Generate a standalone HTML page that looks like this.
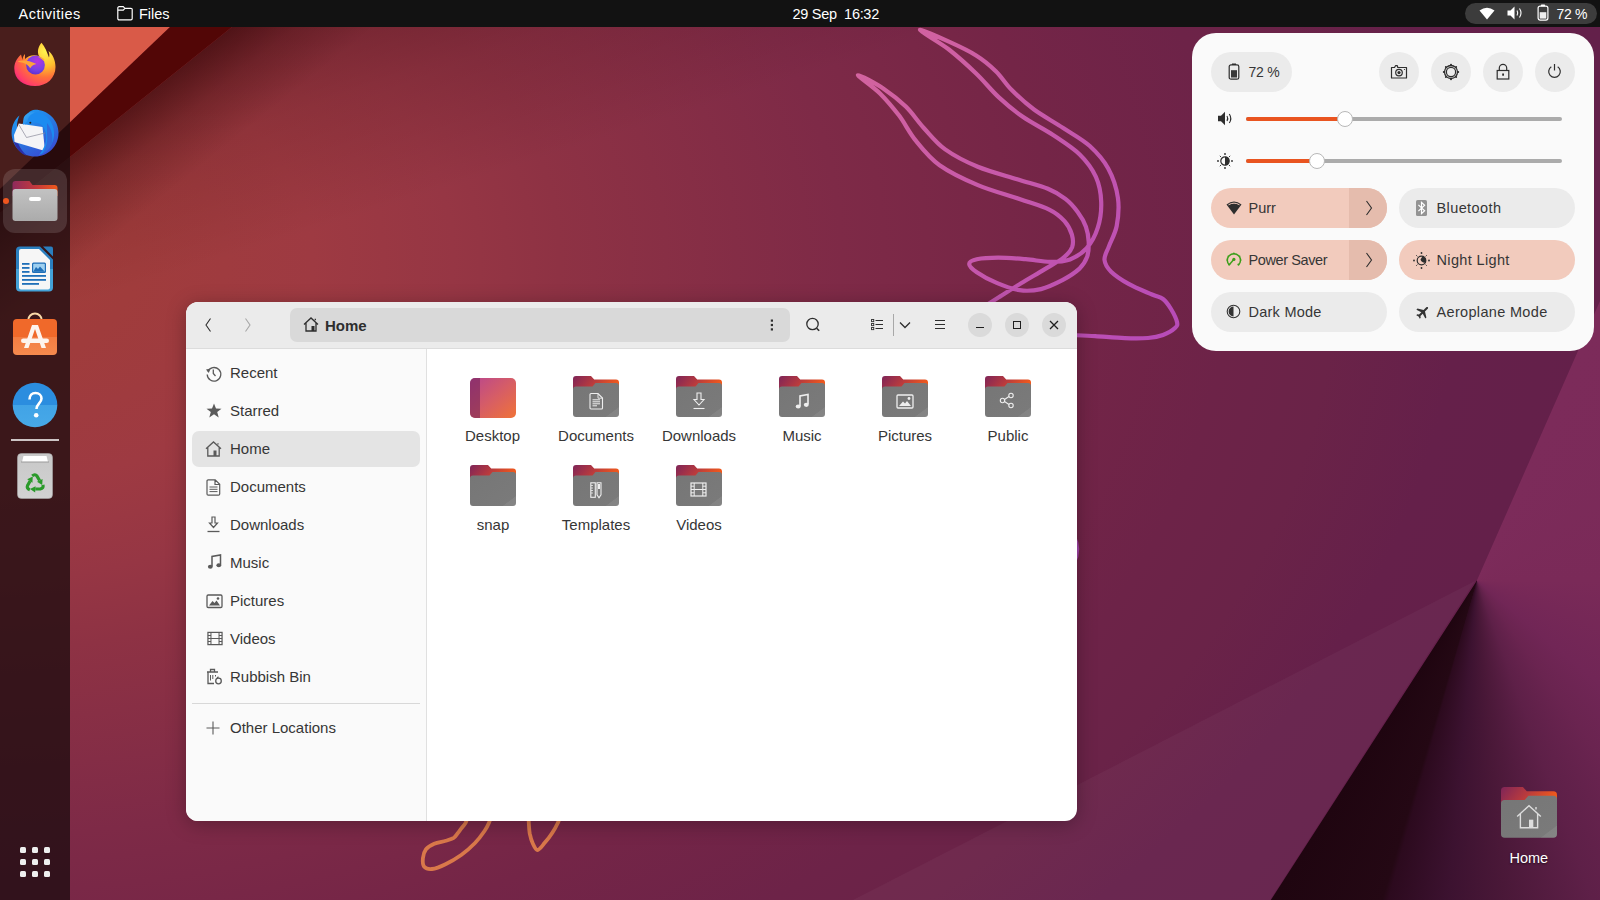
<!DOCTYPE html>
<html><head><meta charset="utf-8">
<style>
*{box-sizing:border-box;margin:0;padding:0}
html,body{width:1600px;height:900px;overflow:hidden;font-family:"Liberation Sans",sans-serif;background:#7a2a40}
.a{position:absolute}
svg{position:absolute;overflow:visible}
.t{position:absolute;white-space:nowrap;line-height:1;font-size:15px}
#topbar{position:absolute;left:0;top:0;width:1600px;height:27px;background:#121212}
#topbar .t{color:#fff;font-size:14.5px}
#dock{position:absolute;left:0;top:27px;width:70px;height:873px;background:rgba(28,12,14,0.76)}
#win{position:absolute;left:186px;top:302px;width:891px;height:519px;border-radius:12px;overflow:hidden;background:#fff;box-shadow:0 3px 20px rgba(0,0,0,0.28)}
#hdr{position:absolute;left:0;top:0;width:891px;height:47px;background:#ebebeb;border-bottom:1px solid #dcdcdc}
#side{position:absolute;left:0;top:47px;width:241px;height:472px;background:#fafafa;border-right:1px solid #e0e0e0}
.sb{color:#363636}
.gl{color:#363636;text-align:center;width:120px}
#qs{position:absolute;left:1192px;top:33px;width:402px;height:318px;border-radius:24px;background:#fafafa;}
.pill{position:absolute;border-radius:20px;height:40px;background:#ebebeb}
.on{background:#f2cbbd}
.qt{color:#363636}
</style></head>
<body>
<!-- WALLPAPER -->
<svg id="wall" style="left:0;top:0" width="1600" height="900" viewBox="0 0 1600 900">
<defs>
<radialGradient id="bg" cx="-40" cy="260" r="1500" gradientUnits="userSpaceOnUse" gradientTransform="translate(-40 260) scale(1.176 0.769) translate(40 -260)">
<stop offset="0" stop-color="#a43e3a"/>
<stop offset="0.1" stop-color="#a03c3c"/>
<stop offset="0.2" stop-color="#9e3a42"/>
<stop offset="0.28" stop-color="#963644"/>
<stop offset="0.34" stop-color="#8e3244"/>
<stop offset="0.5" stop-color="#7e2a47"/>
<stop offset="0.62" stop-color="#742547"/>
<stop offset="0.72" stop-color="#6d2348"/>
<stop offset="0.78" stop-color="#6a2348"/>
<stop offset="0.85" stop-color="#65204a"/>
<stop offset="1" stop-color="#62204a"/>
</radialGradient>
<linearGradient id="tlsh" x1="232" y1="27" x2="288" y2="97" gradientUnits="userSpaceOnUse">
<stop offset="0" stop-color="#2a0000" stop-opacity="0.5"/>
<stop offset="0.45" stop-color="#2a0000" stop-opacity="0.2"/>
<stop offset="1" stop-color="#2a0000" stop-opacity="0"/>
</linearGradient>
<linearGradient id="tlsh2" x1="232" y1="27" x2="298" y2="237" gradientUnits="userSpaceOnUse">
<stop offset="0" stop-color="#2a0000" stop-opacity="0.32"/>
<stop offset="0.45" stop-color="#2a0000" stop-opacity="0.13"/>
<stop offset="1" stop-color="#2a0000" stop-opacity="0"/>
</linearGradient>
<linearGradient id="pinkg" x1="850" y1="60" x2="1180" y2="300" gradientUnits="userSpaceOnUse">
<stop offset="0" stop-color="#d4649e"/>
<stop offset="1" stop-color="#b84cb8"/>
</linearGradient>
<clipPath id="rclip"><polygon points="1475,581 1600,301 1600,900 1270,900"/></clipPath>
<filter id="blur40" x="-50%" y="-50%" width="200%" height="200%"><feGaussianBlur stdDeviation="40"/></filter>
<filter id="blur8" x="-50%" y="-50%" width="200%" height="200%"><feGaussianBlur stdDeviation="8"/></filter>
</defs>
<rect width="1600" height="900" fill="url(#bg)"/>
<polygon points="232,27 1600,27 1600,900 0,900 0,213" fill="url(#tlsh)"/><polygon points="232,27 1600,27 1600,900 0,900 0,213" fill="url(#tlsh2)"/>
<polygon points="0,27 170,27 0,189" fill="#d95a48"/>
<polygon points="170,27 232,27 0,213 0,189" fill="#520606"/>
<polygon points="853,900 1475,581 1270,900" fill="#ffffff" fill-opacity="0.035"/>

<path d="M985.0 306.0 C987.5 304.4 993.8 300.4 999.9 296.6 C1005.9 292.8 1013.6 287.8 1021.1 283.2 C1028.6 278.6 1037.9 273.4 1044.9 269.1 C1052.0 264.8 1059.1 261.2 1063.6 257.5 C1068.2 253.8 1070.8 250.7 1072.2 246.9 C1073.5 243.0 1073.1 238.9 1071.9 234.6 C1070.6 230.3 1068.3 225.4 1064.5 221.2 C1060.8 217.0 1056.6 213.2 1049.2 209.6 C1041.8 205.9 1032.1 203.3 1020.2 199.2 C1008.3 195.1 991.3 190.8 977.9 185.1 C964.4 179.4 949.9 172.5 939.6 165.2 C929.3 157.8 922.7 149.2 916.0 140.9 C909.2 132.7 905.1 123.5 899.1 115.6 C893.1 107.7 886.8 100.2 880.0 93.4 C873.1 86.6 857.3 75.8 858.0 75.1 C858.7 74.3 875.9 83.6 883.9 88.9 C891.8 94.2 899.2 100.1 905.8 106.6 C912.5 113.1 917.3 120.9 923.8 128.0 C930.4 135.1 936.2 142.9 945.2 149.4 C954.2 155.8 965.8 161.8 977.8 166.8 C989.8 171.8 1005.5 175.6 1017.2 179.2 C1028.9 182.9 1039.9 185.4 1047.9 188.7 C1055.9 191.9 1060.4 195.0 1065.4 198.9 C1070.4 202.7 1074.3 207.4 1077.7 212.0 C1081.1 216.6 1084.1 221.7 1085.9 226.7 C1087.7 231.7 1088.5 237.0 1088.7 241.9 C1088.9 246.9 1088.7 252.1 1087.2 256.6 C1085.6 261.1 1083.3 264.9 1079.2 268.9 C1075.0 272.8 1068.7 276.8 1062.4 280.2 C1056.0 283.5 1048.1 287.4 1041.0 289.1 C1033.9 290.7 1027.0 291.3 1019.6 290.2 C1012.2 289.2 1003.8 285.9 996.7 282.9 C989.5 279.9 981.4 275.4 976.8 272.2 C972.2 269.0 969.2 266.1 969.2 263.9 C969.2 261.8 972.0 260.3 976.8 259.2 C981.6 258.2 990.1 257.6 998.2 257.6 C1006.4 257.6 1017.0 258.5 1025.7 259.2 C1034.4 259.9 1042.8 261.8 1050.2 261.8 C1057.5 261.8 1063.9 261.6 1070.0 259.4 C1076.1 257.1 1082.1 253.3 1086.7 248.1 C1091.3 242.8 1095.4 235.3 1097.8 227.6 C1100.3 219.9 1101.5 210.4 1101.2 201.9 C1100.9 193.5 1099.5 184.9 1095.9 176.9 C1092.3 169.0 1086.9 161.5 1079.7 154.5 C1072.4 147.5 1062.1 141.1 1052.7 134.8 C1043.2 128.5 1031.8 123.1 1022.8 116.8 C1013.8 110.5 1006.4 104.3 998.6 97.1 C990.8 89.9 984.4 81.4 976.1 73.5 C967.8 65.5 958.2 56.8 948.9 49.5 C939.5 42.3 919.9 31.4 919.9 30.1 C919.9 28.8 939.5 37.4 948.9 41.7 C958.2 45.9 968.3 50.5 976.1 55.5 C984.0 60.4 989.9 65.5 995.8 71.2 C1001.7 76.9 1005.2 83.4 1011.5 89.8 C1017.9 96.2 1025.3 103.1 1034.0 109.5 C1042.6 115.8 1054.0 121.9 1063.2 128.0 C1072.5 134.1 1082.2 139.2 1089.8 146.0 C1097.2 152.8 1103.6 159.9 1108.2 168.5 C1112.9 177.1 1116.5 188.2 1117.9 197.8 C1119.3 207.3 1118.2 217.9 1116.7 226.0 C1115.1 234.1 1110.8 241.0 1108.8 246.6 C1106.7 252.2 1104.1 255.7 1104.5 259.9 C1104.9 264.1 1107.0 267.6 1111.1 271.7 C1115.2 275.7 1122.3 280.4 1129.1 284.2 C1135.9 288.1 1146.3 292.0 1152.0 294.5 C1157.7 297.0 1159.8 296.6 1163.0 299.0 C1166.2 301.4 1168.7 305.2 1171.0 309.0 C1173.3 312.8 1176.3 318.8 1177.0 322.0 C1177.7 325.2 1177.3 325.8 1175.0 328.0 C1172.7 330.2 1167.5 333.3 1163.0 335.0 C1158.5 336.7 1154.4 337.5 1148.0 338.0 C1141.6 338.6 1133.5 338.5 1124.8 338.2 C1116.0 337.9 1104.4 336.7 1095.2 336.1 C1086.1 335.6 1074.2 335.2 1070.0 335.0" fill="none" stroke="url(#pinkg)" stroke-width="4.2" stroke-linecap="round" stroke-linejoin="round"/>
<path d="M467.5 817.0 C467.2 818.0 466.6 820.9 465.6 822.8 C464.6 824.6 462.9 826.5 461.5 828.2 C460.1 830.0 458.8 831.9 457.5 833.5 C456.2 835.1 455.7 836.5 453.8 837.8 C451.8 839.0 449.0 839.8 445.8 840.8 C442.5 841.8 437.5 842.3 434.2 843.8 C431.0 845.2 427.9 846.8 426.0 849.2 C424.1 851.7 423.2 855.3 422.9 858.2 C422.6 861.2 422.8 865.0 424.2 866.8 C425.8 868.5 428.3 869.4 431.9 869.0 C435.4 868.6 440.6 866.6 445.5 864.2 C450.4 861.9 456.3 858.5 461.2 855.0 C466.2 851.5 471.1 847.0 475.0 843.0 C478.9 839.0 482.1 834.5 484.5 831.0 C486.9 827.5 488.2 824.6 489.2 822.2 C490.3 819.9 490.7 817.9 491.0 817.0" fill="none" stroke="#d9784a" stroke-width="3.8" stroke-linecap="round" stroke-linejoin="round"/>
<path d="M528.8 817.0 C528.8 818.0 528.6 820.5 528.8 823.2 C529.0 825.9 529.1 830.0 529.7 833.4 C530.4 836.8 531.5 840.7 532.8 843.5 C534.1 846.2 535.5 850.1 537.5 850.0 C539.5 849.9 542.2 845.8 544.7 842.8 C547.2 839.9 550.4 835.7 552.5 832.4 C554.7 829.1 556.6 825.6 557.8 823.0 C559.1 820.5 559.6 818.0 560.0 817.0" fill="none" stroke="#d9784a" stroke-width="3.8" stroke-linecap="round" stroke-linejoin="round"/>
<path d="M1074 536 Q1081 549 1074 563" fill="none" stroke="#a244a8" stroke-width="3.5"/>
</svg>

<div class="a" style="left:1250px;top:280px;width:350px;height:620px;clip-path:polygon(226.8px 300.8px,350px 21px,350px 620px,20.8px 620px);background:conic-gradient(from 0deg at 226.8px 300.8px,#7c2b5a 24deg,#7a2a58 90deg,#712656 130deg,#6a2450 145deg,#5e2048 160deg,#4a1838 175deg,#3c1230 185deg,#2c0a1e 195.5deg,#240814 196.5deg,#1f0510 212.7deg)"></div>
<!-- TOP BAR -->
<div id="topbar">
<div class="t" style="left:18.5px;top:7px;letter-spacing:0.5px">Activities</div>
<svg style="left:116px;top:5px" width="18" height="16" viewBox="0 0 18 16"><path d="M1.8 3 a1.3 1.3 0 0 1 1.3-1.3 h4.2 l1.6 1.6 h6 a1.3 1.3 0 0 1 1.3 1.3 v9 a1.3 1.3 0 0 1 -1.3 1.3 h-11.8 a1.3 1.3 0 0 1 -1.3-1.3 z M1.8 5.2 h5.5 l1.5-1.9" fill="none" stroke="#fff" stroke-width="1.2" stroke-linejoin="round"/></svg>
<div class="t" style="left:139px;top:7px">Files</div>
<div class="t" style="left:792.5px;top:7px;letter-spacing:-0.3px">29 Sep&nbsp; 16:32</div>
<div class="a" style="left:1465px;top:3px;width:132px;height:21px;border-radius:11px;background:#3c3c3c"></div>
<svg style="left:1479px;top:7px" width="16" height="13" viewBox="0 0 16 13"><path d="M0.5 3.5 Q8 -2 15.5 3.5 L8 12.5 Z" fill="#fff"/></svg>
<svg style="left:1507px;top:6px" width="16" height="14" viewBox="0 0 16 14"><path d="M0.5 4.5 h3 l4-4 v13 l-4-4 h-3 z" fill="#fff"/><path d="M10 4.5 q1.5 2.5 0 5 M12.5 2.5 q3 4.5 0 9" fill="none" stroke="#fff" stroke-width="1.1"/></svg>
<svg style="left:1537px;top:4px" width="12" height="17" viewBox="0 0 12 17"><rect x="4" y="0.6" width="4" height="1.6" rx="0.5" fill="#fff"/><rect x="1.1" y="2.1" width="9.8" height="14" rx="2" fill="none" stroke="#fff" stroke-width="1.2"/><rect x="2.7" y="8.2" width="6.6" height="6.4" fill="#eee"/></svg>
<div class="t" style="left:1556.5px;top:7px;font-size:14px;letter-spacing:-0.3px">72 %</div>
</div>

<!-- DOCK -->
<div id="dock"></div>
<!-- firefox -->
<svg style="left:13px;top:42px" width="44" height="44" viewBox="0 0 44 44">
<defs>
<radialGradient id="ffo" cx="0.75" cy="0.2" r="1.0"><stop offset="0" stop-color="#fff44f"/><stop offset="0.35" stop-color="#ffbd2e"/><stop offset="0.6" stop-color="#ff7139"/><stop offset="0.85" stop-color="#ff3c6a"/><stop offset="1" stop-color="#e31587"/></radialGradient>
<radialGradient id="ffg" cx="0.6" cy="0.3" r="0.8"><stop offset="0" stop-color="#b833e1"/><stop offset="0.6" stop-color="#7542e5"/><stop offset="1" stop-color="#592acb"/></radialGradient>
</defs>
<path d="M28.5 0.8 C25 5 24 10 26 14 C20 12 15 14 12 17 L12 12 C10.5 13.5 9.5 15.5 9.5 18 L8 12.5 C3 17 1.3 22 1.3 26.5 C1.3 37 10 44 22 44 C34 44 42.5 36 42.5 25 C42.5 18 39.5 12 35.5 9 C36.5 12 36.5 14 36 15.5 C34 10 32 5 28.5 0.8 Z" fill="url(#ffo)"/>
<circle cx="22.5" cy="23" r="9.4" fill="url(#ffg)"/>
<path d="M30.5 19 C29 17 27 15.8 25 15.6 C27.5 14.5 30 15.5 31.5 17.5 Z" fill="#ffb52e"/>
<path d="M4.5 19.2 C9 18 14 18.2 18.5 20 C20.5 20.8 22 21.5 23.5 22 C21 22.3 18.8 23.5 17.2 26.2 C15.5 23.5 13 21.6 9.8 20.8 C8 20.4 6 20 4.5 19.2 Z" fill="#ffa33a"/>
</svg>
<!-- thunderbird -->
<svg style="left:11px;top:109px" width="48" height="48" viewBox="0 0 48 48">
<defs><linearGradient id="tbb" x1="0.2" y1="0" x2="0.8" y2="1"><stop offset="0" stop-color="#1d9cf5"/><stop offset="0.55" stop-color="#2a72de"/><stop offset="1" stop-color="#3a48d2"/></linearGradient>
<linearGradient id="tbh" x1="0" y1="0" x2="1" y2="1"><stop offset="0" stop-color="#3bb0f8"/><stop offset="1" stop-color="#1f7ae6"/></linearGradient></defs>
<path d="M24 0.8 C37 0.8 47.5 11 47.5 24 C47.5 37 37 47.5 24 47.5 C11 47.5 0.6 37 0.6 24 C0.6 17 3.5 10.5 8.5 6.5 C6 12 5.5 18 6.5 22 L12 14 C14 6 19 0.8 24 0.8 Z" fill="url(#tbb)"/>
<path d="M2.5 32 C5 40 10 45 16 47 C12 43 9 39 7.5 35 Z" fill="#2b2fa8"/>
<path d="M7.8 14.5 L31.5 18 L34 42 L3.5 33 L3 26 Z" fill="#f4f4f6"/>
<path d="M7.8 15.5 L15.5 28.5 L34 24" fill="none" stroke="#8a8a9a" stroke-width="0.7"/>
<path d="M14 12 C15 5 22 2 29 4 C38 7 44 16 43 27 C42 36 36 43 28 46 C33 40 36 33 35 25 C34 18 30 14 24 13.5 C20 13.2 17 14 14 15.5 Z" fill="#1c8bf0"/>
<path d="M36 14 C41 20 43 30 40 37 C38 41 34 44 30 46 C35 40 37 33 36 25 Z" fill="#2f6adc"/>
<path d="M13 8 C15 4 20 2.5 24 3.5 C20 5 17 8 16.5 12 L12.5 16 C12 13 12.2 10 13 8 Z" fill="url(#tbh)"/>
<circle cx="19.3" cy="13.8" r="1" fill="#222"/>
</svg>
<!-- files (active) -->
<div class="a" style="left:3px;top:169px;width:64px;height:64px;border-radius:12px;background:rgba(255,255,255,0.13)"></div>
<div class="a" style="left:3px;top:198px;width:6px;height:6px;border-radius:3px;background:#f0561f"></div>
<svg style="left:12px;top:180px" width="46" height="42" viewBox="0 0 46 42">
<defs><linearGradient id="dft" x1="0" y1="0" x2="1" y2="0"><stop offset="0" stop-color="#8e2a5c"/><stop offset="0.55" stop-color="#c63a3a"/><stop offset="1" stop-color="#ef5a1c"/></linearGradient>
<linearGradient id="dfb" x1="0" y1="0" x2="0" y2="1"><stop offset="0" stop-color="#c2c2c2"/><stop offset="1" stop-color="#ababab"/></linearGradient></defs>
<path d="M0.5 4 a3 3 0 0 1 3-3 h14 l3 4 h22 a3 3 0 0 1 3 3 v8 h-45 z" fill="url(#dft)"/>
<rect x="0.5" y="9" width="45" height="32" rx="3" fill="url(#dfb)"/>
<rect x="17" y="17" width="12" height="4" rx="2" fill="#fff"/>
</svg>
<!-- writer -->
<svg style="left:16px;top:246px" width="38" height="46" viewBox="0 0 38 46">
<defs><linearGradient id="wrb" x1="0" y1="0" x2="0" y2="1"><stop offset="0" stop-color="#2a7fbf"/><stop offset="0.5" stop-color="#2a7fbf"/><stop offset="0.5" stop-color="#43a2d8"/><stop offset="1" stop-color="#43a2d8"/></linearGradient></defs>
<path d="M4 0.5 h20 l13 13 v28 a4 4 0 0 1 -4 4 h-29 a4 4 0 0 1 -4-4 v-37 a4 4 0 0 1 4-4 z" fill="url(#wrb)"/>
<path d="M5 3 h18 l11 11 v27.5 a2 2 0 0 1 -2 2 h-27 a2 2 0 0 1 -2-2 v-36.5 a2 2 0 0 1 2-2 z" fill="#f6f6f6"/>
<path d="M27 0.5 h8 a2 2 0 0 1 2 2 v8 z" fill="#2a7fbf"/>
<g fill="#1f6fb8"><rect x="6" y="17" width="7.5" height="1.8"/><rect x="6" y="21" width="7.5" height="1.8"/><rect x="6" y="25" width="7.5" height="1.8"/><rect x="6" y="29" width="24" height="1.8"/><rect x="6" y="33" width="24" height="1.8"/><rect x="6" y="37" width="17" height="1.8"/></g>
<rect x="16" y="16.5" width="14" height="10.5" rx="1.5" fill="#1f6fb8"/>
<rect x="17.2" y="17.7" width="11.6" height="8" rx="0.8" fill="#9ed0f0"/>
<path d="M17.2 25.7 L20 21 L22 23 L24 20.5 L28.8 25.7 Z" fill="#1f6fb8"/>
</svg>
<!-- app center -->
<svg style="left:12px;top:312px" width="46" height="44" viewBox="0 0 46 44">
<defs><linearGradient id="acb" x1="0" y1="0" x2="0" y2="1"><stop offset="0" stop-color="#f0692a"/><stop offset="0.5" stop-color="#f0692a"/><stop offset="0.5" stop-color="#f37d42"/><stop offset="1" stop-color="#f58a4e"/></linearGradient></defs>
<path d="M16.2 9.5 v-1.2 a6.8 6.8 0 0 1 13.6 0 v1.2" fill="none" stroke="#f9d9a8" stroke-width="2"/>
<rect x="1" y="7" width="44" height="36" rx="4" fill="url(#acb)"/>
<path d="M12 36 L20 13 h6 L34 36 h-4.5 L23 17 L16.5 36 Z" fill="#fdf4ee"/>
<rect x="9" y="26.5" width="28" height="4.5" rx="2.25" fill="#fdf4ee"/>
</svg>
<!-- help -->
<svg style="left:12px;top:382px" width="46" height="46" viewBox="0 0 46 46">
<defs><linearGradient id="hpb" x1="0" y1="0" x2="0" y2="1"><stop offset="0" stop-color="#2b8ddf"/><stop offset="0.5" stop-color="#2b8ddf"/><stop offset="0.5" stop-color="#41a3e6"/><stop offset="1" stop-color="#47a9e8"/></linearGradient></defs>
<circle cx="23" cy="23" r="22.3" fill="url(#hpb)"/>
<path d="M17.5 17.5 C17.5 13 20 11 23.5 11 C27 11 29.5 13.5 29.5 16.5 C29.5 21 24.5 22 24.5 27" fill="none" stroke="#fff" stroke-width="2.6"/>
<circle cx="24.2" cy="33.2" r="2.3" fill="#fff"/>
</svg>
<div class="a" style="left:11px;top:439px;width:48px;height:2px;background:rgba(255,255,255,0.75)"></div>
<!-- trash -->
<svg style="left:17px;top:453px" width="36" height="46" viewBox="0 0 36 46">
<defs><linearGradient id="trb" x1="0" y1="0" x2="0" y2="1"><stop offset="0" stop-color="#c8c8c8"/><stop offset="1" stop-color="#d2d2d2"/></linearGradient></defs>
<rect x="0.5" y="0.5" width="35" height="45" rx="4" fill="url(#trb)" stroke="#aaa" stroke-width="0.6"/>
<path d="M5 9 L6.5 3 h23 L31 9 Z" fill="#fff"/>
<path d="M4 9 h28" stroke="#999" stroke-width="1"/>
<g transform="translate(18,30.5)"><g id="rarm"><path d="M-2.8 -7.6 Q0 -10 2 -7.4 L4.6 -3" stroke="#2a9a2a" stroke-width="3.2" fill="none"/><path d="M2 -1.8 L7.6 -4.6 L7.2 1.6 Z" fill="#2a9a2a"/></g><use href="#rarm" transform="rotate(120)"/><use href="#rarm" transform="rotate(240)"/></g>
</svg>
<!-- app grid -->
<svg style="left:20px;top:847px" width="30" height="30" viewBox="0 0 30 30"><g fill="#eee">
<rect x="0" y="0" width="6" height="6" rx="1.5"/><rect x="12" y="0" width="6" height="6" rx="1.5"/><rect x="24" y="0" width="6" height="6" rx="1.5"/>
<rect x="0" y="12" width="6" height="6" rx="1.5"/><rect x="12" y="12" width="6" height="6" rx="1.5"/><rect x="24" y="12" width="6" height="6" rx="1.5"/>
<rect x="0" y="24" width="6" height="6" rx="1.5"/><rect x="12" y="24" width="6" height="6" rx="1.5"/><rect x="24" y="24" width="6" height="6" rx="1.5"/>
</g></svg>

<!-- FILES WINDOW -->
<div id="win">
<div id="hdr"></div>
<div id="side"></div>
</div>
<!-- header content -->
<svg style="left:203px;top:317px" width="10" height="16" viewBox="0 0 10 16"><path d="M7.5 1.5 L3 8 L7.5 14.5" fill="none" stroke="#2e2e2e" stroke-width="1.1"/></svg>
<svg style="left:243px;top:317px" width="10" height="16" viewBox="0 0 10 16"><path d="M2.5 1.5 L7 8 L2.5 14.5" fill="none" stroke="#a8a8a8" stroke-width="1.1"/></svg>
<div class="a" style="left:290px;top:308px;width:500px;height:34px;border-radius:7px;background:#d9d9d9"></div>
<svg style="left:303px;top:317px" width="16" height="15" viewBox="0 0 16 15"><path d="M1 7.5 L8 1 L15 7.5 M3 5.8 V14 H13 V5.8 M12.3 3.2 V1.8" fill="none" stroke="#2e2e2e" stroke-width="1.3"/><rect x="8.5" y="9" width="3" height="5" fill="#2e2e2e"/></svg>
<div class="t" style="left:325px;top:318px;font-weight:bold;color:#2e2e2e">Home</div>
<svg style="left:770px;top:319px" width="4" height="12" viewBox="0 0 4 12"><g fill="#2e2e2e"><rect x="0.8" y="0.5" width="2.2" height="2.2"/><rect x="0.8" y="4.9" width="2.2" height="2.2"/><rect x="0.8" y="9.3" width="2.2" height="2.2"/></g></svg>
<svg style="left:804px;top:316px" width="18" height="18" viewBox="0 0 18 18"><circle cx="8.5" cy="8" r="5.7" fill="none" stroke="#2e2e2e" stroke-width="1.3"/><path d="M12.6 12.2 L15.2 14.8" stroke="#2e2e2e" stroke-width="1.6"/></svg>
<svg style="left:870px;top:319px" width="14" height="12" viewBox="0 0 14 12"><g fill="none" stroke="#2e2e2e" stroke-width="0.9"><rect x="1.55" y="0.45" width="2.2" height="2.2"/><rect x="1.55" y="4.45" width="2.2" height="2.2"/><rect x="1.55" y="8.45" width="2.2" height="2.2"/></g><g stroke="#2e2e2e" stroke-width="1.1"><path d="M5.5 1.5 H13 M5.5 5.5 H13 M5.5 9.5 H13"/></g></svg>
<div class="a" style="left:893px;top:314px;width:1px;height:22px;background:#a8a8a8"></div>
<svg style="left:899px;top:321px" width="12" height="8" viewBox="0 0 12 8"><path d="M1 1.5 L6 6.5 L11 1.5" fill="none" stroke="#2e2e2e" stroke-width="1.3"/></svg>
<svg style="left:934px;top:319px" width="12" height="12" viewBox="0 0 12 12"><path d="M1 1.5 H11 M1 5.5 H11 M1 9.5 H11" stroke="#2e2e2e" stroke-width="1.2"/></svg>
<div class="a" style="left:968px;top:313px;width:24px;height:24px;border-radius:12px;background:#dadada"></div>
<div class="a" style="left:1005px;top:313px;width:24px;height:24px;border-radius:12px;background:#dadada"></div>
<div class="a" style="left:1042px;top:313px;width:24px;height:24px;border-radius:12px;background:#dadada"></div>
<div class="a" style="left:976px;top:326.8px;width:8px;height:1.5px;background:#1e1e1e"></div>
<div class="a" style="left:1013px;top:321px;width:8px;height:8px;border:1.3px solid #1e1e1e"></div>
<svg style="left:1049px;top:320px" width="10" height="10" viewBox="0 0 10 10"><path d="M1 1 L9 9 M9 1 L1 9" stroke="#1e1e1e" stroke-width="1.3"/></svg>
<!-- sidebar -->
<div class="a" style="left:192px;top:431px;width:228px;height:36px;border-radius:7px;background:#e4e4e4"></div>
<div class="a" style="left:192px;top:703px;width:228px;height:1px;background:#d8d8d8"></div>
<g></g>
<svg style="left:205px;top:365px" width="17" height="17" viewBox="0 0 17 17"><path d="M2.8 6.5 A6.8 6.8 0 1 1 2.2 9.5" fill="none" stroke="#5a5a5a" stroke-width="1.3"/><path d="M1 4.5 L5.5 3.5 L3.8 8 Z" fill="#5a5a5a"/><path d="M8.3 4.5 V8.5 L10.5 11" fill="none" stroke="#5a5a5a" stroke-width="1.3"/></svg>
<svg style="left:206px;top:403px" width="16" height="15" viewBox="0 0 16 15"><path d="M8 0.5 L10 5.5 L15.5 5.7 L11.2 9 L12.7 14.5 L8 11.3 L3.3 14.5 L4.8 9 L0.5 5.7 L6 5.5 Z" fill="#5a5a5a"/></svg>
<svg style="left:205px;top:441px" width="17" height="16" viewBox="0 0 17 16"><path d="M1 7.8 L8.5 1 L16 7.8 M2.8 6.2 V15 H14.2 V6.2 M13 3.6 V2.2" fill="none" stroke="#5a5a5a" stroke-width="1.3"/><rect x="8.5" y="9.5" width="3" height="5.5" fill="#5a5a5a"/></svg>
<svg style="left:206px;top:479px" width="15" height="17" viewBox="0 0 15 17"><path d="M1 2 a1.2 1.2 0 0 1 1.2-1.2 h7 l4.5 4.5 v9.7 a1.2 1.2 0 0 1 -1.2 1.2 h-10.3 a1.2 1.2 0 0 1 -1.2-1.2 z M9 1 v4.5 h4.5" fill="none" stroke="#5a5a5a" stroke-width="1.2"/><path d="M3.5 8 h8 M3.5 10.3 h8 M3.5 12.6 h8" stroke="#5a5a5a" stroke-width="1"/></svg>
<svg style="left:206px;top:516px" width="15" height="17" viewBox="0 0 15 17"><path d="M6 1 V7 H3.5 L7.5 11.5 L11.5 7 H9 V1 Z" fill="none" stroke="#5a5a5a" stroke-width="1.2"/><path d="M1.5 15.5 H13.5" stroke="#5a5a5a" stroke-width="1.3"/></svg>
<svg style="left:207px;top:554px" width="15" height="16" viewBox="0 0 15 16"><path d="M5 12.5 V2.5 L13.5 1 V11" fill="none" stroke="#5a5a5a" stroke-width="1.5"/><ellipse cx="3.3" cy="12.8" rx="2.4" ry="2" fill="#5a5a5a"/><ellipse cx="11.8" cy="11.3" rx="2.4" ry="2" fill="#5a5a5a"/></svg>
<svg style="left:206px;top:594px" width="17" height="15" viewBox="0 0 17 15"><rect x="1" y="1" width="15" height="12.5" rx="1.2" fill="none" stroke="#5a5a5a" stroke-width="1.3"/><path d="M3 11.5 L6.5 7 L8.5 9 L10.5 6.5 L14 11.5 Z" fill="#5a5a5a"/><circle cx="12" cy="4.5" r="1.3" fill="#5a5a5a"/></svg>
<svg style="left:206.5px;top:631px" width="16" height="15" viewBox="0 0 17 15"><rect x="1" y="1" width="15" height="13" fill="none" stroke="#5a5a5a" stroke-width="1.3"/><path d="M4.2 1 V14 M12.8 1 V14 M4.2 7.5 H12.8 M1 4.2 H4.2 M1 7.5 H4.2 M1 10.8 H4.2 M12.8 4.2 H16 M12.8 7.5 H16 M12.8 10.8 H16" stroke="#5a5a5a" stroke-width="1.1"/></svg>
<svg style="left:205px;top:668px" width="18" height="17" viewBox="0 0 18 17"><path d="M2 4 H13 M5.5 4 V1.5 H9.5 V4 M3 4.5 V15.5 H9" fill="none" stroke="#5a5a5a" stroke-width="1.3"/><path d="M5.5 7 V12.5 M7.8 7 V11 M10.5 7 V8.5" stroke="#5a5a5a" stroke-width="1"/><circle cx="13.5" cy="13" r="2.8" fill="none" stroke="#5a5a5a" stroke-width="1.3"/><path d="M12 10 L13.5 8.8" stroke="#5a5a5a" stroke-width="1.2"/></svg>
<svg style="left:206px;top:721px" width="14" height="14" viewBox="0 0 14 14"><path d="M7 0.5 V13.5 M0.5 7 H13.5" stroke="#5a5a5a" stroke-width="1.1"/></svg>
<div class="t sb" style="left:230px;top:365.3px">Recent</div>
<div class="t sb" style="left:230px;top:403.3px">Starred</div>
<div class="t sb" style="left:230px;top:441.3px">Home</div>
<div class="t sb" style="left:230px;top:479.3px">Documents</div>
<div class="t sb" style="left:230px;top:517.3px">Downloads</div>
<div class="t sb" style="left:230px;top:555.3px">Music</div>
<div class="t sb" style="left:230px;top:593.3px">Pictures</div>
<div class="t sb" style="left:230px;top:631.3px">Videos</div>
<div class="t sb" style="left:230px;top:669.3px">Rubbish Bin</div>
<div class="t sb" style="left:230px;top:720.3px">Other Locations</div>
<!-- grid -->
<svg width="0" height="0" style="left:0;top:0"><defs>
<linearGradient id="ftab" x1="0" y1="0" x2="1" y2="0.3"><stop offset="0" stop-color="#7e2558"/><stop offset="0.5" stop-color="#b83a3e"/><stop offset="1" stop-color="#f0591c"/></linearGradient>
<linearGradient id="fbody" x1="0" y1="0" x2="1" y2="1"><stop offset="0" stop-color="#767676"/><stop offset="0.85" stop-color="#7a7a7a"/><stop offset="0.86" stop-color="#838383"/><stop offset="1" stop-color="#858585"/></linearGradient>
<linearGradient id="desk" x1="0" y1="0" x2="1" y2="1"><stop offset="0" stop-color="#b8468f"/><stop offset="0.5" stop-color="#d65d66"/><stop offset="1" stop-color="#f07338"/></linearGradient>
<symbol id="fold" viewBox="0 0 46 42"><path d="M0 3 a3 3 0 0 1 3-3 h15 l3.2 3.5 h21.8 a3 3 0 0 1 3 3 v10 h-46 z" fill="url(#ftab)"/><path d="M0 13.5 a3 3 0 0 1 3-3 h16.5 l3-3.5 h20.5 a3 3 0 0 1 3 3 v28 a3 3 0 0 1 -3 3 h-40 a3 3 0 0 1 -3-3 z" fill="url(#fbody)"/></symbol>
</defs></svg>
<svg style="left:470px;top:378px" width="46" height="40" viewBox="0 0 46 40"><rect x="0" y="0" width="46" height="40" rx="5" fill="url(#desk)"/><path d="M5 0 h5 v40 h-5 a5 5 0 0 1 -5-5 v-30 a5 5 0 0 1 5-5 z" fill="#6e2055" opacity="0.55"/></svg>
<svg style="left:573px;top:376px" width="46" height="42"><use href="#fold"/></svg>
<svg style="left:676px;top:376px" width="46" height="42"><use href="#fold"/></svg>
<svg style="left:779px;top:376px" width="46" height="42"><use href="#fold"/></svg>
<svg style="left:882px;top:376px" width="46" height="42"><use href="#fold"/></svg>
<svg style="left:985px;top:376px" width="46" height="42"><use href="#fold"/></svg>
<svg style="left:470px;top:465px" width="46" height="42"><use href="#fold"/></svg>
<svg style="left:573px;top:465px" width="46" height="42"><use href="#fold"/></svg>
<svg style="left:676px;top:465px" width="46" height="42"><use href="#fold"/></svg>
<!-- emblems -->
<svg style="left:589px;top:393px" width="15" height="17" viewBox="0 0 15 17"><path d="M1 1.5 a1 1 0 0 1 1-1 h7 l4.5 4.5 v10 a1 1 0 0 1 -1 1 h-10.5 a1 1 0 0 1 -1-1 z" fill="none" stroke="#eee" stroke-width="1.1"/><path d="M9 0.8 V5.2 H13.3" fill="none" stroke="#eee" stroke-width="0.9"/><path d="M3.5 6.8 h7.5 M3.5 8.8 h7.5 M3.5 10.8 h7.5 M3.5 12.8 h4.5" stroke="#eee" stroke-width="1"/></svg>
<svg style="left:692px;top:392px" width="14" height="18" viewBox="0 0 14 18"><path d="M5 1 V7.5 H2 L7 13 L12 7.5 H9 V1 Z" fill="none" stroke="#eee" stroke-width="1.1"/><path d="M1.5 16.5 H12.5" stroke="#eee" stroke-width="1.1"/></svg>
<svg style="left:795px;top:393px" width="15" height="17" viewBox="0 0 15 17"><path d="M5 13 V3 L13 1.5 V11" fill="none" stroke="#eee" stroke-width="1.6"/><ellipse cx="3.2" cy="13.5" rx="2.5" ry="2.1" fill="#eee"/><ellipse cx="11.3" cy="11.8" rx="2.5" ry="2.1" fill="#eee"/></svg>
<svg style="left:896px;top:394px" width="18" height="15" viewBox="0 0 18 15"><rect x="1" y="1" width="16" height="13" rx="1" fill="none" stroke="#eee" stroke-width="1.3"/><path d="M3 12 L7 7.5 L9 9.5 L11 7 L15 12 Z" fill="#eee"/><circle cx="13" cy="4.5" r="1.4" fill="#eee"/></svg>
<svg style="left:999px;top:392px" width="16" height="17" viewBox="0 0 16 17"><g fill="none" stroke="#eee" stroke-width="1.1"><circle cx="3.5" cy="8.5" r="2.2"/><circle cx="12" cy="3.5" r="2.2"/><circle cx="12" cy="13.5" r="2.2"/><path d="M5.5 7.5 L10 4.5 M5.5 9.5 L10 12.5"/></g></svg>
<svg style="left:590px;top:482px" width="12" height="17" viewBox="0 0 12 17"><g fill="none" stroke="#eee" stroke-width="1.1"><rect x="0.8" y="0.8" width="4.5" height="14.5"/><path d="M7 0.8 h4 v12 l-2 3 l-2-3 z"/></g><path d="M1 3.5 h2 M1 6 h2 M1 8.5 h2 M1 11 h2" stroke="#eee" stroke-width="0.8"/><rect x="8" y="2" width="2" height="5" fill="#eee"/></svg>
<svg style="left:690px;top:482px" width="17" height="15" viewBox="0 0 17 15"><rect x="1" y="1" width="15" height="13" fill="none" stroke="#eee" stroke-width="1.2"/><path d="M4.2 1 V14 M12.8 1 V14 M4.2 7.5 H12.8 M1 4.2 H4.2 M1 7.5 H4.2 M1 10.8 H4.2 M12.8 4.2 H16 M12.8 7.5 H16 M12.8 10.8 H16" stroke="#eee" stroke-width="1"/></svg>
<div class="t gl" style="left:432.5px;top:428px">Desktop</div>
<div class="t gl" style="left:536px;top:428px">Documents</div>
<div class="t gl" style="left:639px;top:428px">Downloads</div>
<div class="t gl" style="left:742px;top:428px">Music</div>
<div class="t gl" style="left:845px;top:428px">Pictures</div>
<div class="t gl" style="left:948px;top:428px">Public</div>
<div class="t gl" style="left:433px;top:517px">snap</div>
<div class="t gl" style="left:536px;top:517px">Templates</div>
<div class="t gl" style="left:639px;top:517px">Videos</div>

<!-- QUICK SETTINGS -->
<div id="qs"></div>
<div class="pill" style="left:1211px;top:52px;width:81px"></div>
<svg style="left:1228px;top:63px" width="12" height="17" viewBox="0 0 12 17"><rect x="4" y="0.5" width="4" height="1.5" fill="#2e2e2e"/><rect x="1.2" y="1.8" width="9.6" height="14.4" rx="1.8" fill="none" stroke="#2e2e2e" stroke-width="1.2"/><rect x="3" y="7.2" width="6" height="7.3" fill="#3a3a3a"/></svg>
<div class="t qt" style="left:1248.5px;top:64.7px;font-size:14px;letter-spacing:-0.2px">72 %</div>
<div class="a" style="left:1379px;top:52px;width:40px;height:40px;border-radius:20px;background:#ebebeb"></div>
<div class="a" style="left:1431px;top:52px;width:40px;height:40px;border-radius:20px;background:#ebebeb"></div>
<div class="a" style="left:1483px;top:52px;width:40px;height:40px;border-radius:20px;background:#ebebeb"></div>
<div class="a" style="left:1535px;top:52px;width:40px;height:40px;border-radius:20px;background:#ebebeb"></div>
<svg style="left:1390px;top:64px" width="18" height="15" viewBox="0 0 18 15"><path d="M1.5 3.5 h3 l1-1.8 h1.8 l0.5 1.8 h8.7 v10.5 h-15 z" fill="none" stroke="#2e2e2e" stroke-width="1.2" stroke-linejoin="round"/><circle cx="9" cy="8.6" r="3.3" fill="none" stroke="#2e2e2e" stroke-width="1.2"/><circle cx="9" cy="8.6" r="1.6" fill="#2e2e2e"/><circle cx="14.5" cy="5.5" r="0.6" fill="#2e2e2e"/></svg>
<svg style="left:1442px;top:63px" width="18" height="18" viewBox="0 0 18 18"><circle cx="9" cy="9" r="6.5" fill="none" stroke="#2e2e2e" stroke-width="1.3"/><circle cx="9" cy="9" r="4.6" fill="none" stroke="#2e2e2e" stroke-width="1.2"/><g fill="#2e2e2e"><circle cx="9" cy="1.8" r="1"/><circle cx="9" cy="16.2" r="1"/><circle cx="1.8" cy="9" r="1"/><circle cx="16.2" cy="9" r="1"/><circle cx="3.9" cy="3.9" r="1"/><circle cx="14.1" cy="14.1" r="1"/><circle cx="3.9" cy="14.1" r="1"/><circle cx="14.1" cy="3.9" r="1"/></g></svg>
<svg style="left:1496px;top:63px" width="14" height="17" viewBox="0 0 14 17"><path d="M3.3 7.5 V5 a3.7 3.7 0 0 1 7.4 0 V7.5" fill="none" stroke="#2e2e2e" stroke-width="1.2"/><rect x="1.2" y="7.5" width="11.6" height="8.5" fill="none" stroke="#2e2e2e" stroke-width="1.2"/><rect x="6.2" y="10.5" width="1.8" height="2.2" fill="#2e2e2e"/></svg>
<svg style="left:1547px;top:63px" width="15" height="16" viewBox="0 0 15 16"><path d="M4.3 3.8 A5.8 5.8 0 1 0 10.7 3.8" fill="none" stroke="#2e2e2e" stroke-width="1.2"/><path d="M7.5 1 V7.5" stroke="#2e2e2e" stroke-width="1.2"/></svg>
<!-- sliders -->
<svg style="left:1217px;top:111px" width="16" height="15" viewBox="0 0 16 15"><path d="M1 4.8 h3 l4-4 v13.4 l-4-4 h-3 z" fill="#2e2e2e"/><path d="M10 5 q1.5 2.5 0 5 M12.3 3 q3 4.5 0 9" fill="none" stroke="#2e2e2e" stroke-width="1.1"/></svg>
<div class="a" style="left:1246px;top:117px;width:316px;height:4px;border-radius:2px;background:#ababab"></div>
<div class="a" style="left:1246px;top:117px;width:99px;height:4px;border-radius:2px;background:#e95420"></div>
<div class="a" style="left:1336.5px;top:111px;width:16px;height:16px;border-radius:8px;background:#fff;border:1px solid #b8b8b8"></div>
<svg style="left:1217px;top:153px" width="16" height="16" viewBox="0 0 16 16"><circle cx="8" cy="8" r="4.2" fill="none" stroke="#2e2e2e" stroke-width="1.2"/><path d="M8 3.8 A4.2 4.2 0 0 1 8 12.2 Z" fill="#2e2e2e"/><g fill="#2e2e2e"><circle cx="8" cy="1" r="0.9"/><circle cx="8" cy="15" r="0.9"/><circle cx="1" cy="8" r="0.9"/><circle cx="15" cy="8" r="0.9"/></g><path d="M2.8 2.8 L4 4 M13.2 13.2 L12 12 M2.8 13.2 L4 12 M13.2 2.8 L12 4" stroke="#2e2e2e" stroke-width="0.9"/></svg>
<div class="a" style="left:1246px;top:159px;width:316px;height:4px;border-radius:2px;background:#ababab"></div>
<div class="a" style="left:1246px;top:159px;width:71px;height:4px;border-radius:2px;background:#e95420"></div>
<div class="a" style="left:1308.8px;top:153px;width:16px;height:16px;border-radius:8px;background:#fff;border:1px solid #b8b8b8"></div>
<!-- toggles -->
<div class="pill on" style="left:1211px;top:188px;width:176px;overflow:hidden"><div class="a" style="left:138px;top:0;width:38px;height:40px;background:#e5bcad"></div></div>
<div class="pill on" style="left:1211px;top:240px;width:176px;overflow:hidden"><div class="a" style="left:138px;top:0;width:38px;height:40px;background:#e5bcad"></div></div>
<div class="pill" style="left:1399px;top:188px;width:176px"></div>
<div class="pill on" style="left:1399px;top:240px;width:176px"></div>
<div class="pill" style="left:1211px;top:292px;width:176px"></div>
<div class="pill" style="left:1399px;top:292px;width:176px"></div>
<svg style="left:1365px;top:200px" width="8" height="16" viewBox="0 0 8 16"><path d="M1.5 1 L6.5 8 L1.5 15" fill="none" stroke="#2e2e2e" stroke-width="1.1"/></svg>
<svg style="left:1365px;top:252px" width="8" height="16" viewBox="0 0 8 16"><path d="M1.5 1 L6.5 8 L1.5 15" fill="none" stroke="#2e2e2e" stroke-width="1.1"/></svg>
<svg style="left:1226px;top:201px" width="16" height="14" viewBox="0 0 16 14"><path d="M0.5 3.5 Q8 -2.5 15.5 3.5 L8 13.5 Z" fill="#2e2e2e"/><path d="M2.5 3.8 Q8 0.5 13.5 3.8" fill="none" stroke="#f2cbbd" stroke-width="1"/></svg>
<svg style="left:1226px;top:252px" width="16" height="16" viewBox="0 0 16 16"><path d="M3.5 13.2 A6.6 6.6 0 1 1 12.3 13.2" fill="none" stroke="#3c9f1a" stroke-width="1.5"/><g fill="#3c9f1a"><circle cx="7.9" cy="1.4" r="0.9"/><circle cx="2.2" cy="4.2" r="0.8"/><circle cx="13.7" cy="4.2" r="0.8"/><circle cx="1.2" cy="8" r="0.8"/><circle cx="14.7" cy="8" r="0.8"/><circle cx="3.2" cy="12.6" r="1"/><circle cx="12.4" cy="12.6" r="1"/></g><path d="M3.5 12.5 L7.5 7.8" stroke="#3c9f1a" stroke-width="1.4"/><circle cx="7.9" cy="7.4" r="1.6" fill="#3c9f1a"/></svg>
<svg style="left:1226px;top:304px" width="15" height="15" viewBox="0 0 15 15"><circle cx="7.5" cy="7.5" r="6.3" fill="none" stroke="#333" stroke-width="1.1"/><path d="M7.5 2.6 A4.9 4.9 0 0 0 7.5 12.4 Z" fill="#333"/></svg>
<svg style="left:1416px;top:200px" width="11" height="16" viewBox="0 0 11 16"><rect x="0" y="0" width="11" height="16" rx="1.6" fill="#939393"/><path d="M2.4 4.9 L8.6 10.7 L5.5 13.6 V2.4 L8.6 5.3 L2.4 11.1" fill="none" stroke="#fff" stroke-width="1.2"/></svg>
<svg style="left:1413px;top:252px" width="17" height="17" viewBox="0 0 17 17"><circle cx="8.5" cy="8.5" r="4.3" fill="none" stroke="#2e2e2e" stroke-width="1.2"/><path d="M9.5 4.3 A4.3 4.3 0 0 1 12.5 10.5 A4 4 0 0 1 7.5 7.5 Z" fill="#2e2e2e"/><g fill="#2e2e2e"><circle cx="8.5" cy="1" r="0.9"/><circle cx="8.5" cy="16" r="0.9"/><circle cx="1" cy="8.5" r="0.9"/><circle cx="16" cy="8.5" r="0.9"/></g><path d="M3.2 3.2 L4.4 4.4 M13.8 13.8 L12.6 12.6 M3.2 13.8 L4.4 12.6 M13.8 3.2 L12.6 4.4" stroke="#2e2e2e" stroke-width="0.9"/></svg>
<svg style="left:1415px;top:304px" width="16" height="16" viewBox="0 0 24 24"><path transform="rotate(45 12 12)" d="M21.5 16.5v-2.2l-8-5V3.5c0-.9-.7-1.8-1.5-1.8S10.5 2.6 10.5 3.5v5.8l-8 5v2.2l8-2.5V19l-2.2 1.6V22.5l3.7-1.1 3.7 1.1v-1.9L13.5 19v-5z" fill="#333"/></svg>
<div class="t qt" style="left:1248.5px;top:201px;font-size:14.5px">Purr</div>
<div class="t qt" style="left:1248.5px;top:253px;font-size:14.5px;letter-spacing:-0.4px">Power Saver</div>
<div class="t qt" style="left:1248.5px;top:305px;font-size:14.5px;letter-spacing:0.25px">Dark Mode</div>
<div class="t qt" style="left:1436.5px;top:201px;font-size:14.5px;letter-spacing:0.4px">Bluetooth</div>
<div class="t qt" style="left:1436.5px;top:253px;font-size:14.5px;letter-spacing:0.35px">Night Light</div>
<div class="t qt" style="left:1436.5px;top:305px;font-size:14.5px;letter-spacing:0.33px">Aeroplane Mode</div>
<!-- desktop home icon -->
<svg style="left:1501px;top:787px" width="56" height="52" viewBox="0 0 46 42" preserveAspectRatio="none"><use href="#fold" width="46" height="42"/></svg>
<svg style="left:1515px;top:803px" width="28" height="28" viewBox="0 0 26 26"><path d="M2 12.5 L13 2.5 L24 12.5 M5 10 V23 H21 V10 M19.5 6 V3.8" fill="none" stroke="#ddd" stroke-width="1.3"/><rect x="13" y="15.5" width="4" height="7.5" fill="#ddd"/></svg>
<div class="t" style="left:1509.5px;top:851px;color:#fff;font-size:14.5px;text-shadow:0 1px 2px rgba(0,0,0,0.6)">Home</div>

</body></html>
